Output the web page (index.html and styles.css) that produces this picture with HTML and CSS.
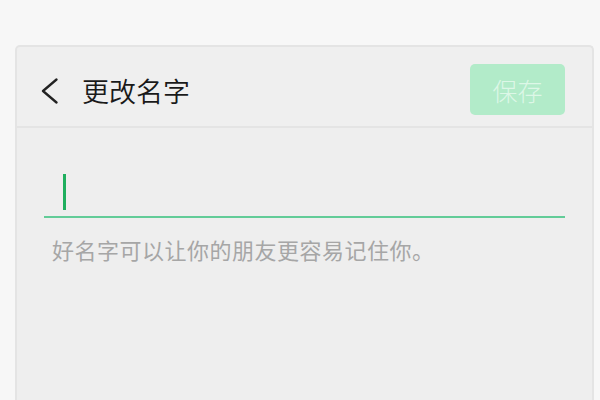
FILE: index.html
```html
<!DOCTYPE html>
<html lang="zh-CN">
<head>
    <meta charset="UTF-8">
    <meta name="viewport" content="width=device-width, initial-scale=1.0">
    <title>更改名字</title>
    <link rel="stylesheet" href="styles.css">
</head>
<body>
    <div class="card">
        <!-- 顶部栏 -->
        <div class="header">
            <button class="back" aria-label="返回">
                <svg width="17" height="26" viewBox="0 0 17 26">
                    <path d="M15.5 1.5 L2 13 L15.5 24.5" fill="none" stroke="#222" stroke-width="2.3" stroke-linecap="round" stroke-linejoin="round"/>
                </svg>
            </button>
            <div class="title">更改名字</div>
            <button class="save" disabled>保存</button>
        </div>

        <!-- 输入区 -->
        <div class="content">
            <div class="field">
                <span class="cursor"></span>
            </div>
            <p class="hint">好名字可以让你的朋友更容易记住你。</p>
        </div>
    </div>
</body>
</html>
```

FILE: styles.css
```css
body {
    margin: 0;
    padding: 45px 6px 0 15px;
    height: 400px;
    box-sizing: border-box;
    overflow: hidden;
    background-color: #f7f7f7;
    font-family: "Noto Sans CJK SC", "Noto Sans", sans-serif;
}

.card {
    height: 355px;
    border: 2px solid #e4e4e4;
    border-bottom: none;
    border-radius: 5px 5px 0 0;
    box-sizing: border-box;
    background-color: #eeeeee;
}

.header {
    display: flex;
    align-items: center;
    height: 81px;
    padding: 8px 27px 0 24px;
    box-sizing: border-box;
    border-bottom: 2px solid #e4e4e4;
    background-color: #efefef;
    border-radius: 4px 4px 0 0;
}

.back {
    display: flex;
    padding: 0;
    margin-right: 24px;
    border: none;
    background: none;
    cursor: pointer;
}

.title {
    flex: 1;
    font-size: 27px;
    font-weight: 350;
    color: #1a1a1a;
    line-height: 34px;
}

.save {
    width: 95px;
    height: 51px;
    margin-top: -2px;
    padding: 0;
    font-family: inherit;
    font-size: 25px;
    font-weight: 300;
    color: #ddf7e7;
    background-color: #b2ebc9;
    border: none;
    border-radius: 5px;
}

.content {
    padding: 46px 27px 0 27px;
}

.field {
    height: 42px;
    border-bottom: 2px solid #62cc98;
}

.cursor {
    display: block;
    width: 3px;
    height: 36px;
    margin: 0 0 0 19px;
    background-color: #1faf5e;
}

.hint {
    margin: 17px 0 0 8px;
    font-size: 22px;
    letter-spacing: 0.5px;
    line-height: 28px;
    color: #a6a6a6;
}
```
